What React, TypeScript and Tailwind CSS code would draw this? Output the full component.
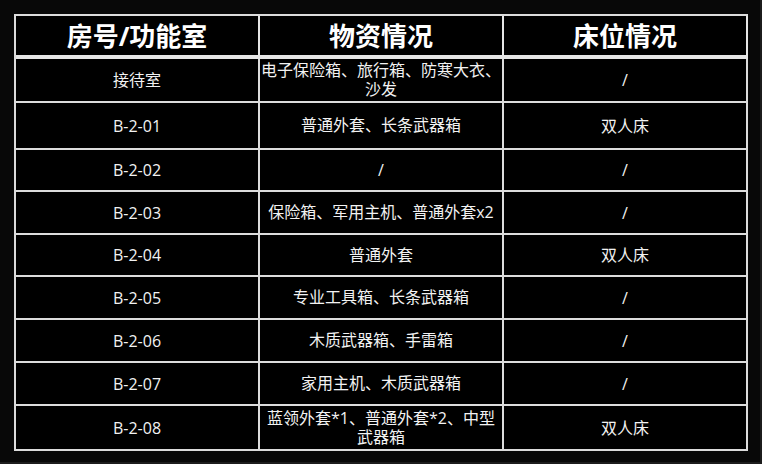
const ROWS: { room: string; items: string[]; bed: string; h: string }[] = [
  { room: "接待室", items: ["电子保险箱、旅行箱、防寒大衣、", "沙发"], bed: "/", h: "h-[44px]" },
  { room: "B-2-01", items: ["普通外套、长条武器箱"], bed: "双人床", h: "h-[47px]" },
  { room: "B-2-02", items: ["/"], bed: "/", h: "h-[42px]" },
  { room: "B-2-03", items: ["保险箱、军用主机、普通外套x2"], bed: "/", h: "h-[43px]" },
  { room: "B-2-04", items: ["普通外套"], bed: "双人床", h: "h-[42px]" },
  { room: "B-2-05", items: ["专业工具箱、长条武器箱"], bed: "/", h: "h-[43px]" },
  { room: "B-2-06", items: ["木质武器箱、手雷箱"], bed: "/", h: "h-[43px]" },
  { room: "B-2-07", items: ["家用主机、木质武器箱"], bed: "/", h: "h-[43px]" },
  { room: "B-2-08", items: ["蓝领外套*1、普通外套*2、中型", "武器箱"], bed: "双人床", h: "h-[45px]" },
];

const HEADERS = ["房号/功能室", "物资情况", "床位情况"];

export default function App() {
  return (
    <div
      className="h-[464px] w-[762px] overflow-hidden border-r-2 border-b-2 border-[#1c1c1c] bg-[#080808] pt-[14px] pl-[14px] text-[#f2f2f2]"
      style={{ fontFamily: '"Open Sans", "Noto Sans CJK SC", sans-serif' }}
    >
      <div className="grid w-[734px] grid-cols-[244px_244px_244px] border-t-2 border-l-2 border-[#dcdcdc] bg-black">
        {HEADERS.map((h) => (
          <div
            key={h}
            className="flex h-[43px] items-center justify-center border-r-2 border-b-4 border-[#e6e6e6] text-[26px] leading-none font-bold text-white"
          >
            {h}
          </div>
        ))}

        {ROWS.map((row) => (
          <div key={row.room} className="contents">
            <div className={`${row.h} flex items-center justify-center border-r-2 border-b-2 border-[#dcdcdc] text-[16px]`}>
              {row.room}
            </div>
            <div
              className={`${row.h} flex items-center justify-center border-r-2 border-b-2 border-[#dcdcdc] text-center text-[16px] leading-[19px] whitespace-nowrap`}
            >
              <p>
                {row.items[0]}
                {row.items[1] && (
                  <>
                    <br />
                    {row.items[1]}
                  </>
                )}
              </p>
            </div>
            <div className={`${row.h} flex items-center justify-center border-r-2 border-b-2 border-[#dcdcdc] text-[16px]`}>
              {row.bed}
            </div>
          </div>
        ))}
      </div>
    </div>
  );
}
